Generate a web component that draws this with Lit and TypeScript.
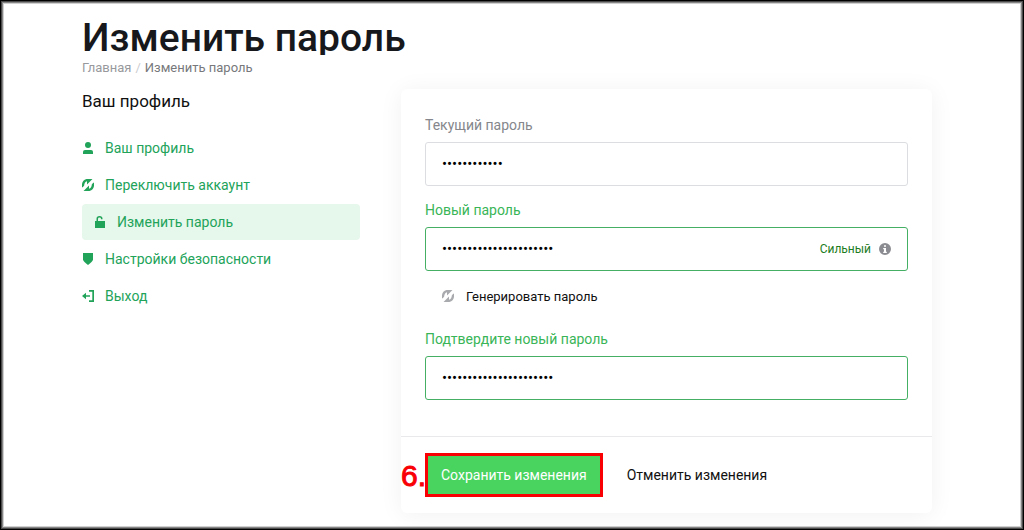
import { LitElement, html, css, svg, nothing } from "lit";
import { customElement, state } from "lit/decorators.js";
import { classMap } from "lit/directives/class-map.js";

const icons = {
  user: svg`<circle cx="6" cy="3" r="3"/><path d="M1 12v-2.200Q1 8 3 8h6q2 0 2 1.800V12z"/>`,
  sync: svg`<path d="M4.500 0H10.500L5 5.500V2.300Q2.300 3 2.200 6.500L.8 8.300H0V5Q.6 1.200 4.500 0z"/><path d="M7.500 12H1.500L7 6.500V9.700Q9.700 9 9.800 5.500L11.200 3.700H12V7Q11.400 10.800 7.500 12z"/>`,
  lock: svg`<path d="M2.500 5V2.600Q2.500 0 5.500 0Q8.500 0 8.500 2.600V3.200H7V2.700Q7 1.500 5.500 1.500Q4 1.500 4 2.700V5H11V12H1V5z"/>`,
  shield: svg`<path d="M1 0H11V6.500Q11 8 6 12Q1 8 1 6.500z"/>`,
  exit: svg`<path d="M7 0H12V12H7V10.300H10.300V1.700H7z"/><path d="M0 6L4 2.800V5.200H8V6.800H4V9.200z"/>`,
  info: svg`<path fill-rule="evenodd" d="M6 0A6 6 0 1 1 6 12A6 6 0 1 1 6 0M5 2.200V3.800H7V2.200zM4.200 5V6.200H5V8.800H4.200V10H7.800V8.800H7V5z"/>`,
};

const icon = (name: keyof typeof icons) =>
  html`<svg class="icon" viewBox="0 0 12 12" aria-hidden="true">${icons[name]}</svg>`;

const links: { label: string; icon: keyof typeof icons; active?: boolean }[] = [
  { label: "Ваш профиль", icon: "user" },
  { label: "Переключить аккаунт", icon: "sync" },
  { label: "Изменить пароль", icon: "lock", active: true },
  { label: "Настройки безопасности", icon: "shield" },
  { label: "Выход", icon: "exit" },
];

@customElement("profile-nav")
export class ProfileNav extends LitElement {
  static styles = css`
    :host { display: block; }
    .heading { margin: 0 0 17px; font-size: 17px; line-height: 24px; font-weight: 400; color: #111; }
    .list { display: grid; gap: 1px; margin: 0; padding: 0; list-style: none; }
    .link {
      display: flex; align-items: center; gap: 11px; height: 36px;
      color: #22a35a; font-size: 14px; text-decoration: none; border-radius: 4px;
    }
    .active { padding: 0 12px; background: #e6f7eb; }
    .icon { width: 12px; height: 12px; flex: none; fill: currentColor; }
  `;

  render() {
    return html`
      <h2 class="heading">Ваш профиль</h2>
      <nav aria-label="Ваш профиль">
        <ul class="list">
          ${links.map(
            (l) => html`<li>
              <a class=${classMap({ link: true, active: !!l.active })} href="#"
                aria-current=${l.active ? "page" : nothing}>${icon(l.icon)}<span>${l.label}</span></a>
            </li>`
          )}
        </ul>
      </nav>
    `;
  }
}

@customElement("password-form")
export class PasswordForm extends LitElement {
  @state() private current = "x".repeat(12);
  @state() private fresh = "x".repeat(22);

  static styles = css`
    :host { display: block; }
    .card { border-radius: 6px; background: #fff; box-shadow: 0 2px 24px rgba(0, 0, 0, 0.06); }
    .fields { padding: 24px 24px 36px; }
    .label { display: block; margin-bottom: 5px; font-size: 14px; line-height: 24px; color: #85878c; }
    .field + .field { margin-top: 12px; }
    .box {
      display: flex; align-items: center; box-sizing: border-box; height: 44px; padding: 0 16px;
      border: 1px solid #dcdde0; border-radius: 3px;
    }
    .input {
      flex: 1; min-width: 0; padding: 0; border: 0; outline: 0; background: none;
      font: 15px Roboto, sans-serif; color: #000;
    }
    .valid .label { color: #39b557; }
    .valid .box { border-color: #45b064; }
    .strength { margin-right: 8px; font-size: 12px; color: #1e7d1e; }
    .icon { width: 12px; height: 12px; flex: none; fill: #8b8c91; }
    .generate {
      display: flex; align-items: center; gap: 12px; height: 26px; margin: 12px 0 18px; padding: 0 17px;
      border: 0; background: none; font: 13px Roboto, sans-serif; color: #111;
    }
    .generate .icon { fill: #a9aaae; }
    .footer {
      position: relative; display: flex; gap: 8px; padding: 16px 24px; border-top: 1px solid #e9e9eb;
    }
    .button {
      height: 44px; padding: 0 16px; border: 0; border-radius: 3px; background: none;
      font: 14px Roboto, sans-serif; color: #111;
    }
    .primary { background: #49d45f; color: #fff; border-radius: 0; outline: 3px solid #f90005; outline-offset: -3px; }
    .step {
      position: absolute; left: 0; top: 20px; line-height: 38px;
      font-family: "Liberation Sans", sans-serif; font-size: 30px; color: #f90005;
      -webkit-text-stroke: 1px #f90005;
    }
  `;

  render() {
    return html`
      <form class="card" @submit=${(e: Event) => e.preventDefault()}>
        <div class="fields">
          <div class="field">
            <label class="label" for="current">Текущий пароль</label>
            <div class="box"><input class="input" id="current" type="password" .value=${this.current} /></div>
          </div>
          <div class="field valid">
            <label class="label" for="fresh">Новый пароль</label>
            <div class="box">
              <input class="input" id="fresh" type="password" .value=${this.fresh} />
              <span class="strength">Сильный</span>${icon("info")}
            </div>
          </div>
          <button class="generate" type="button">${icon("sync")}<span>Генерировать пароль</span></button>
          <div class="field valid">
            <label class="label" for="confirm">Подтвердите новый пароль</label>
            <div class="box"><input class="input" id="confirm" type="password" .value=${this.fresh} /></div>
          </div>
        </div>
        <div class="footer">
          <span class="step">6.</span>
          <button class="button primary" type="submit">Сохранить изменения</button>
          <button class="button" type="button">Отменить изменения</button>
        </div>
      </form>
    `;
  }
}

@customElement("app-root")
export class AppRoot extends LitElement {
  static styles = css`
    :host {
      display: block; box-sizing: border-box; min-height: 100vh; overflow: hidden;
      padding: 22px 92px 17px 82px; background: #fff;
      font-family: Roboto, sans-serif; color: #111;
      box-shadow: inset 0 0 0 1px #000, inset 0 0 0 2px #4a4a4a, inset 0 0 0 3px #858585, inset 0 0 0 4px #d0d0d0;
    }
    .title {
      margin: 0 0 3px; overflow: hidden; font-size: 39px; line-height: 33px; font-weight: 500; color: #17181b;
    }
    .crumbs { display: flex; gap: 4px; margin-bottom: 11px; font-size: 13px; line-height: 20px; color: #77787c; }
    .home { color: #98999d; text-decoration: none; }
    .slash { color: #cccdd0; }
    .columns { display: grid; grid-template-columns: 278fr 531fr; gap: 41px; align-items: start; }
  `;

  render() {
    return html`
      <h1 class="title">Изменить пароль</h1>
      <nav class="crumbs" aria-label="Навигация">
        <a class="home" href="#">Главная</a><span class="slash">/</span><span>Изменить пароль</span>
      </nav>
      <main class="columns">
        <profile-nav></profile-nav>
        <password-form></password-form>
      </main>
    `;
  }
}
